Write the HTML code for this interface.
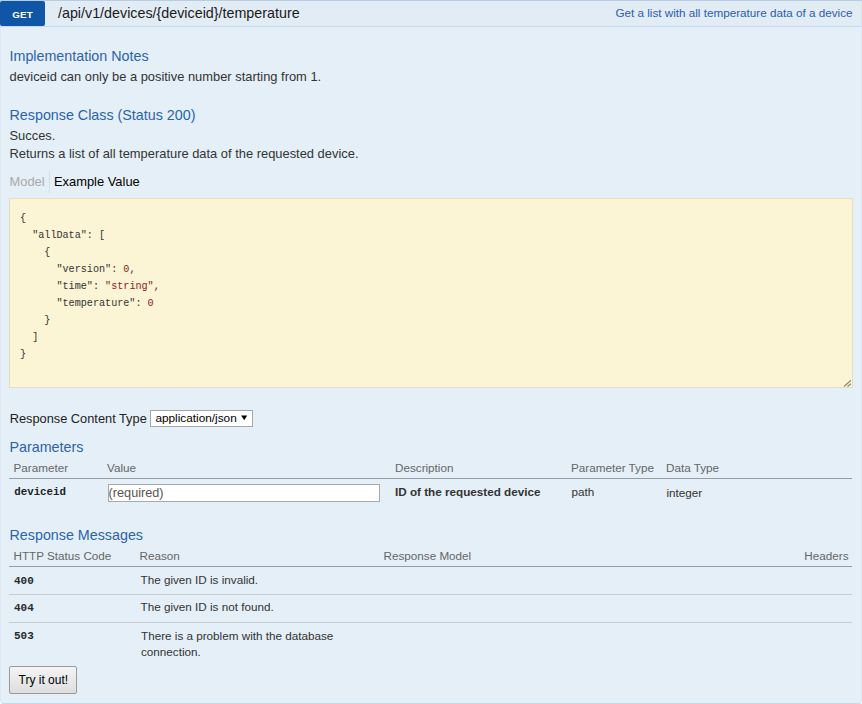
<!DOCTYPE html>
<html><head><meta charset="utf-8"><style>
html,body{margin:0;padding:0;background:#fff;width:862px;height:704px;overflow:hidden;position:relative;font-family:"Liberation Sans",sans-serif;}
.t{position:absolute;white-space:nowrap;}
.heading{position:absolute;left:0;top:0;width:860px;height:25px;background:#e2ecf5;border:1px solid #c3d9ec;border-top-color:#b6cde3;border-left-color:#d5e3ef;border-right-color:#d5e3ef;}
.badge{position:absolute;left:0;top:1px;width:45px;height:25px;background:#1155a6;border-radius:2px;color:#fff;font:bold 10px/25px "Liberation Sans",sans-serif;text-align:center;}
.content{position:absolute;left:0;top:27px;width:860px;height:676px;background:#e5eff7;border:1px solid #dde8f2;border-bottom-color:#c3d9ec;border-top:none;border-radius:0 0 4px 4px;}
.sep{position:absolute;left:49px;top:171px;width:1px;height:22px;background:#d5dde5;}
.pre{position:absolute;left:9px;top:198px;width:842px;height:188px;background:#fbf4d5;border:1px solid #e5dfc0;}
.select{position:absolute;left:150px;top:410px;width:101px;height:15px;background:#fff;border:1px solid #a6a6a6;}
.hline{position:absolute;height:1px;}
.input{position:absolute;left:108px;top:484px;width:270px;height:16px;background:#fff;border:1px solid #a9a9a9;}
.btn{position:absolute;left:9px;top:666px;width:66px;height:26px;border:1px solid #9a9a9a;border-radius:2px;background:linear-gradient(#f4f4f4,#dedede);}
</style></head><body>
<div class="heading"></div>
<div class="content"></div>
<div class="badge"></div>
<div class="t" style="left:0;top:10.4px;width:45px;text-align:center;font:bold 9.8px/9px 'Liberation Sans',sans-serif;color:#fff;letter-spacing:0.15px">GET</div>
<div class="sep"></div>
<div class="pre"></div>
<svg style="position:absolute;left:841px;top:376px" width="12" height="12"><path d="M3 10.5 L10 4.3 M6.5 10.5 L10 7.8" stroke="#8a8a82" stroke-width="1.2"/></svg>
<div class="select"></div>
<svg style="position:absolute;left:240px;top:414px" width="9" height="9"><path d="M1.2 1.6 H7.2 L4.2 6.2 Z" fill="#000"/></svg>
<div class="hline" style="left:9px;top:478px;width:843px;background:#959ca3"></div>
<div class="input"></div>
<div class="hline" style="left:9px;top:566px;width:843px;background:#959ca3"></div>
<div class="hline" style="left:9px;top:594px;width:843px;background:#c8cdd2"></div>
<div class="hline" style="left:9px;top:622px;width:843px;background:#c8cdd2"></div>
<div class="btn"></div>
<div class="t" style="left:58.00px;top:3.95px;font-size:14.30px;line-height:19px;color:#1a1a1a;font-family:'Liberation Sans', sans-serif;">/api/v1/devices/{deviceid}/temperature</div>
<div class="t" style="right:9.50px;top:4.85px;font-size:11.70px;line-height:15px;color:#2a5db0;font-family:'Liberation Sans', sans-serif;">Get a list with all temperature data of a device</div>
<div class="t" style="left:9.50px;top:46.55px;font-size:14.30px;line-height:19px;color:#2a63ad;font-family:'Liberation Sans', sans-serif;">Implementation Notes</div>
<div class="t" style="left:9.50px;top:68.23px;font-size:12.90px;line-height:17px;color:#333;font-family:'Liberation Sans', sans-serif;">deviceid can only be a positive number starting from 1.</div>
<div class="t" style="left:9.50px;top:105.75px;font-size:14.30px;line-height:19px;color:#2a63ad;font-family:'Liberation Sans', sans-serif;">Response Class (Status 200)</div>
<div class="t" style="left:9.50px;top:126.63px;font-size:12.90px;line-height:17px;color:#333;font-family:'Liberation Sans', sans-serif;">Succes.</div>
<div class="t" style="left:9.50px;top:145.23px;font-size:12.90px;line-height:17px;color:#333;font-family:'Liberation Sans', sans-serif;">Returns a list of all temperature data of the requested device.</div>
<div class="t" style="left:9.50px;top:173.43px;font-size:12.90px;line-height:17px;color:#aaa;font-family:'Liberation Sans', sans-serif;">Model</div>
<div class="t" style="left:54.00px;top:173.43px;font-size:12.90px;line-height:17px;color:#000;font-family:'Liberation Sans', sans-serif;">Example Value</div>
<div class="t" style="left:9.70px;top:410.06px;font-size:12.80px;line-height:17px;color:#222;font-family:'Liberation Sans', sans-serif;">Response Content Type</div>
<div class="t" style="left:9.50px;top:438.15px;font-size:14.30px;line-height:19px;color:#2a63ad;font-family:'Liberation Sans', sans-serif;">Parameters</div>
<div class="t" style="left:13.50px;top:460.15px;font-size:11.70px;line-height:15px;color:#666;font-family:'Liberation Sans', sans-serif;">Parameter</div>
<div class="t" style="left:107.00px;top:460.15px;font-size:11.70px;line-height:15px;color:#666;font-family:'Liberation Sans', sans-serif;">Value</div>
<div class="t" style="left:395.00px;top:460.15px;font-size:11.70px;line-height:15px;color:#666;font-family:'Liberation Sans', sans-serif;">Description</div>
<div class="t" style="left:571.00px;top:460.15px;font-size:11.70px;line-height:15px;color:#666;font-family:'Liberation Sans', sans-serif;">Parameter Type</div>
<div class="t" style="left:666.00px;top:460.15px;font-size:11.70px;line-height:15px;color:#666;font-family:'Liberation Sans', sans-serif;">Data Type</div>
<div class="t" style="left:14.20px;top:485.32px;font-size:10.80px;line-height:14px;color:#222;font-family:'Liberation Mono', monospace;font-weight:bold;">deviceid</div>
<div class="t" style="left:395.00px;top:484.25px;font-size:11.70px;line-height:15px;color:#333;font-family:'Liberation Sans', sans-serif;font-weight:bold;">ID of the requested device</div>
<div class="t" style="left:571.50px;top:483.75px;font-size:11.70px;line-height:15px;color:#333;font-family:'Liberation Sans', sans-serif;">path</div>
<div class="t" style="left:666.50px;top:485.45px;font-size:11.70px;line-height:15px;color:#333;font-family:'Liberation Sans', sans-serif;">integer</div>
<div class="t" style="left:9.50px;top:525.75px;font-size:14.30px;line-height:19px;color:#2a63ad;font-family:'Liberation Sans', sans-serif;">Response Messages</div>
<div class="t" style="left:13.50px;top:548.35px;font-size:11.70px;line-height:15px;color:#666;font-family:'Liberation Sans', sans-serif;">HTTP Status Code</div>
<div class="t" style="left:139.50px;top:548.35px;font-size:11.70px;line-height:15px;color:#666;font-family:'Liberation Sans', sans-serif;">Reason</div>
<div class="t" style="left:383.50px;top:548.35px;font-size:11.70px;line-height:15px;color:#666;font-family:'Liberation Sans', sans-serif;">Response Model</div>
<div class="t" style="right:13.50px;top:548.35px;font-size:11.70px;line-height:15px;color:#666;font-family:'Liberation Sans', sans-serif;">Headers</div>
<div class="t" style="left:14.00px;top:573.57px;font-size:11.00px;line-height:14px;color:#2a2a2a;font-family:'Liberation Mono', monospace;font-weight:bold;">400</div>
<div class="t" style="left:140.50px;top:571.55px;font-size:11.70px;line-height:15px;color:#333;font-family:'Liberation Sans', sans-serif;">The given ID is invalid.</div>
<div class="t" style="left:14.00px;top:601.07px;font-size:11.00px;line-height:14px;color:#2a2a2a;font-family:'Liberation Mono', monospace;font-weight:bold;">404</div>
<div class="t" style="left:140.50px;top:599.05px;font-size:11.70px;line-height:15px;color:#333;font-family:'Liberation Sans', sans-serif;">The given ID is not found.</div>
<div class="t" style="left:14.00px;top:629.47px;font-size:11.00px;line-height:14px;color:#2a2a2a;font-family:'Liberation Mono', monospace;font-weight:bold;">503</div>
<div class="t" style="left:141.00px;top:628.15px;font-size:11.70px;line-height:15px;color:#333;font-family:'Liberation Sans', sans-serif;">There is a problem with the database</div>
<div class="t" style="left:141.00px;top:644.15px;font-size:11.70px;line-height:15px;color:#333;font-family:'Liberation Sans', sans-serif;">connection.</div>
<div class="t" style="left:155.40px;top:410.81px;font-size:11.80px;line-height:15px;color:#000;font-family:'Liberation Sans', sans-serif;">application/json</div>
<div class="t" style="left:108.60px;top:484.70px;font-size:12.70px;line-height:17px;color:#555;font-family:'Liberation Sans', sans-serif;">(required)</div>
<div class="t" style="left:18.50px;top:671.64px;font-size:12.00px;line-height:16px;color:#000;font-family:'Liberation Sans', sans-serif;">Try it out!</div>
<div class="t" style="left:20.00px;top:209.90px;font-size:10.13px;line-height:17px;color:#333;font-family:'Liberation Mono', monospace;">{</div>
<div class="t" style="left:20.00px;top:226.90px;font-size:10.13px;line-height:17px;color:#333;font-family:'Liberation Mono', monospace;">&nbsp;&nbsp;"allData":&nbsp;[</div>
<div class="t" style="left:20.00px;top:243.90px;font-size:10.13px;line-height:17px;color:#333;font-family:'Liberation Mono', monospace;">&nbsp;&nbsp;&nbsp;&nbsp;{</div>
<div class="t" style="left:20.00px;top:260.90px;font-size:10.13px;line-height:17px;color:#333;font-family:'Liberation Mono', monospace;">&nbsp;&nbsp;&nbsp;&nbsp;&nbsp;&nbsp;"version":&nbsp;<span style="color:#8b1a2b">0</span>,</div>
<div class="t" style="left:20.00px;top:277.90px;font-size:10.13px;line-height:17px;color:#333;font-family:'Liberation Mono', monospace;">&nbsp;&nbsp;&nbsp;&nbsp;&nbsp;&nbsp;"time":&nbsp;<span style="color:#8b1a2b">"string"</span>,</div>
<div class="t" style="left:20.00px;top:294.90px;font-size:10.13px;line-height:17px;color:#333;font-family:'Liberation Mono', monospace;">&nbsp;&nbsp;&nbsp;&nbsp;&nbsp;&nbsp;"temperature":&nbsp;<span style="color:#8b1a2b">0</span></div>
<div class="t" style="left:20.00px;top:311.90px;font-size:10.13px;line-height:17px;color:#333;font-family:'Liberation Mono', monospace;">&nbsp;&nbsp;&nbsp;&nbsp;}</div>
<div class="t" style="left:20.00px;top:328.90px;font-size:10.13px;line-height:17px;color:#333;font-family:'Liberation Mono', monospace;">&nbsp;&nbsp;]</div>
<div class="t" style="left:20.00px;top:345.90px;font-size:10.13px;line-height:17px;color:#333;font-family:'Liberation Mono', monospace;">}</div>
</body></html>
